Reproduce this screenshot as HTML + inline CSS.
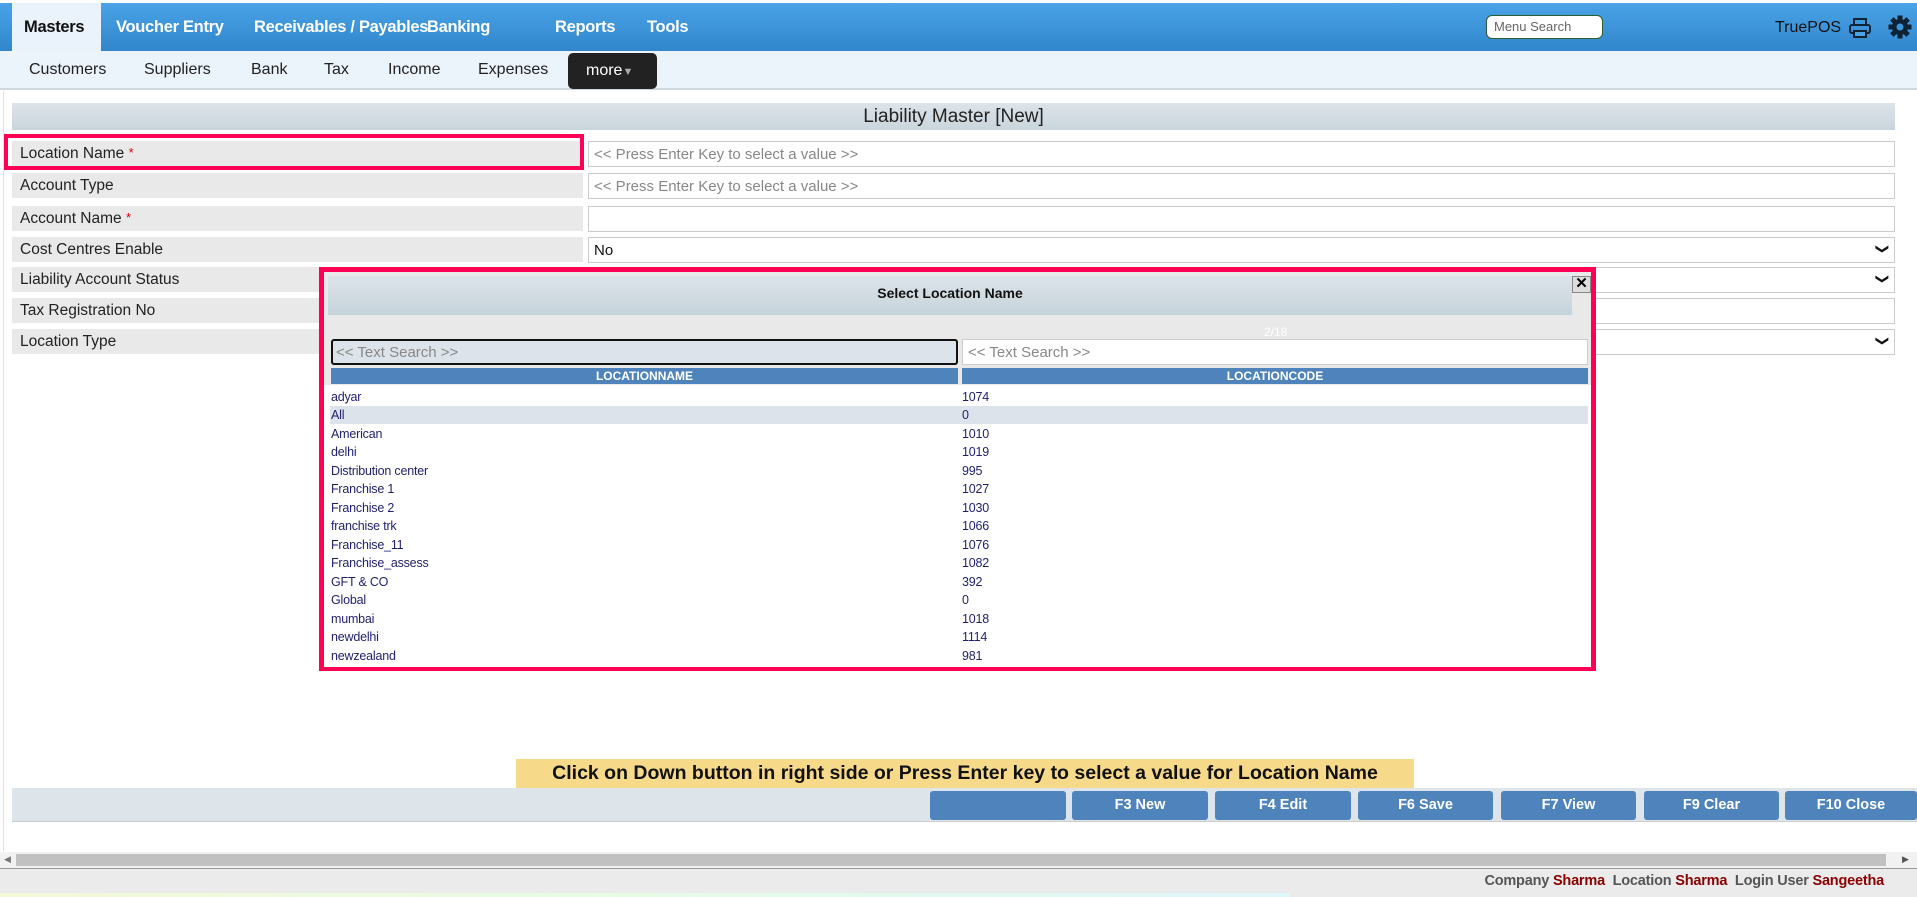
<!DOCTYPE html>
<html><head><meta charset="utf-8"><style>
*{box-sizing:border-box;margin:0;padding:0}
body{width:1917px;height:897px;position:relative;overflow:hidden;background:#fff;font-family:"Liberation Sans",Arial,sans-serif}
.a{position:absolute}
.nav{left:0;top:3px;width:1917px;height:48px;background:linear-gradient(#4aa3e6,#3186cc)}
.nav span{position:absolute;top:15px;color:#fff;font-weight:bold;font-size:16.5px;letter-spacing:-0.3px}
.sub{left:0;top:51px;width:1917px;height:39px;background:#ebf3fb;border-bottom:2px solid #cfd8df}
.sub span{position:absolute;top:10px;font-size:16px;color:#222}
.lbl{position:absolute;left:12px;width:571px;height:25px;background:#e9e9e9;font-size:15.5px;color:#222;padding:4px 8px}
.inp{position:absolute;left:588px;width:1307px;height:26px;border:1px solid #ccc;background:#fff;font-size:15px;color:#888;padding:4px 5px}
.sel{color:#111}
.chev{position:absolute;right:6px;top:3px;font-size:13px;color:#111;transform:rotate(90deg);display:inline-block}
.star{color:#d00;font-size:13px;vertical-align:top}
.row{position:absolute;left:330px;width:1258px;height:18px;font-size:12.5px;color:#1f1f70;letter-spacing:-0.2px}
.row b{font-weight:normal;position:absolute;left:1px;top:2px}
.row i{font-style:normal;position:absolute;left:632px;top:2px}
.btn{position:absolute;top:791px;height:29px;background:#4f83bb;border-radius:3px;color:#fff;font-weight:bold;font-size:14.5px;text-align:center;line-height:29px}
</style></head><body>
<div class="a nav">
 <div class="a" style="left:12px;top:0;width:89px;height:48px;background:#eaf3fb"></div>
 <span style="left:24px;color:#111">Masters</span>
 <span style="left:116px">Voucher Entry</span>
 <span style="left:254px">Receivables / Payables</span>
 <span style="left:427px">Banking</span>
 <span style="left:555px">Reports</span>
 <span style="left:647px">Tools</span>
 <div class="a" style="left:1486px;top:12px;width:117px;height:24px;background:#fff;border:1px solid #2c5e2c;border-radius:6px;font-size:13px;color:#666;padding:3px 7px">Menu Search</div>
 <div class="a" style="left:1775px;top:16px;font-size:16px;color:#111">TruePOS</div>
 <svg class="a" style="left:1849px;top:15px" width="22" height="20" viewBox="0 0 22 20"><rect x="5" y="1" width="12" height="6" fill="none" stroke="#123" stroke-width="2"/><rect x="1" y="7" width="20" height="8" rx="2" fill="none" stroke="#123" stroke-width="2"/><rect x="5" y="13" width="12" height="6" fill="#4aa3e6" stroke="#123" stroke-width="2"/></svg>
 <svg class="a" style="left:1888px;top:12px" width="24" height="24" viewBox="0 0 24 24"><g fill="#0d2233"><circle cx="12" cy="12" r="8"/><rect x="9.5" y="0.5" width="5" height="23"/><rect x="0.5" y="9.5" width="23" height="5"/><rect x="9.5" y="0.5" width="5" height="23" transform="rotate(45 12 12)"/><rect x="9.5" y="0.5" width="5" height="23" transform="rotate(-45 12 12)"/></g><circle cx="12" cy="12" r="3.5" fill="#3a95db"/></svg>
</div>
<div class="a sub">
 <span style="left:29px">Customers</span><span style="left:144px">Suppliers</span><span style="left:251px">Bank</span><span style="left:324px">Tax</span><span style="left:388px">Income</span><span style="left:478px">Expenses</span>
 <div class="a" style="left:568px;top:2px;width:89px;height:36px;background:#222;border-radius:5px;color:#fff;font-size:16px;padding:9px 0 0 18px">more<span style="position:static;color:#aaa;font-size:11px">▼</span></div>
</div>
<div class="a" style="left:3px;top:91px;width:1px;height:760px;background:#e2e2e2"></div>
<div class="a" style="left:12px;top:103px;width:1883px;height:27px;background:linear-gradient(#dde4ea,#c9d5dc);font-size:19px;color:#222;text-align:center;line-height:27px">Liability Master [New]</div>

<div class="lbl" style="top:141px">Location Name <span class="star">*</span></div>
<div class="lbl" style="top:173px">Account Type</div>
<div class="lbl" style="top:206px">Account Name <span class="star">*</span></div>
<div class="lbl" style="top:237px">Cost Centres Enable</div>
<div class="lbl" style="top:267px">Liability Account Status</div>
<div class="lbl" style="top:298px">Tax Registration No</div>
<div class="lbl" style="top:329px">Location Type</div>
<div class="a" style="left:4px;top:134px;width:580px;height:36px;border:4px solid #ff0055"></div>

<div class="inp" style="top:141px">&lt;&lt; Press Enter Key to select a value &gt;&gt;</div>
<div class="inp" style="top:173px">&lt;&lt; Press Enter Key to select a value &gt;&gt;</div>
<div class="inp" style="top:206px"></div>
<div class="inp sel" style="top:237px">No<span class="chev">❯</span></div>
<div class="inp sel" style="top:267px"><span class="chev">❯</span></div>
<div class="inp" style="top:298px"></div>
<div class="inp sel" style="top:329px"><span class="chev">❯</span></div>

<div class="a" style="left:319px;top:267px;width:1277px;height:404px;border:5px solid #ff0055;background:#e9e9e9">
 <div class="a" style="left:4px;top:4px;width:1244px;height:39px;background:linear-gradient(#dde4ea,#c6d3da);text-align:center;font-weight:bold;font-size:14px;line-height:34px;color:#111">Select Location Name</div>
 <div class="a" style="left:1248px;top:4px;width:19px;height:17px;background:#ddd;border:1px solid #888;font-size:15px;font-weight:bold;line-height:14px;text-align:center">✕</div>
 <div class="a" style="left:940px;top:53px;font-size:12px;color:#fff">2/18</div>
 <div class="a" style="left:7px;top:67px;width:627px;height:26px;background:#dce3ea;border:2px solid #111;border-radius:3px;font-size:15px;color:#888;padding:3px 3px">&lt;&lt; Text Search &gt;&gt;</div>
 <div class="a" style="left:638px;top:67px;width:626px;height:26px;background:#fff;border:1px solid #ccc;font-size:15px;color:#888;padding:4px 5px">&lt;&lt; Text Search &gt;&gt;</div>
 <div class="a" style="left:7px;top:96px;width:627px;height:16px;background:#4f83bb;color:#fff;font-weight:bold;font-size:12px;text-align:center;line-height:16px">LOCATIONNAME</div>
 <div class="a" style="left:638px;top:96px;width:626px;height:16px;background:#4f83bb;color:#fff;font-weight:bold;font-size:12px;text-align:center;line-height:16px">LOCATIONCODE</div>
 <div class="a" style="left:0;top:113px;width:1267px;height:282px;background:#fff"></div>
</div>
<div class="row" style="top:388px"><b>adyar</b><i>1074</i></div>
<div class="row" style="top:406px;background:#dce3ea"><b>All</b><i>0</i></div>
<div class="row" style="top:425px"><b>American</b><i>1010</i></div>
<div class="row" style="top:443px"><b>delhi</b><i>1019</i></div>
<div class="row" style="top:462px"><b>Distribution center</b><i>995</i></div>
<div class="row" style="top:480px"><b>Franchise 1</b><i>1027</i></div>
<div class="row" style="top:499px"><b>Franchise 2</b><i>1030</i></div>
<div class="row" style="top:517px"><b>franchise trk</b><i>1066</i></div>
<div class="row" style="top:536px"><b>Franchise_11</b><i>1076</i></div>
<div class="row" style="top:554px"><b>Franchise_assess</b><i>1082</i></div>
<div class="row" style="top:573px"><b>GFT &amp; CO</b><i>392</i></div>
<div class="row" style="top:591px"><b>Global</b><i>0</i></div>
<div class="row" style="top:610px"><b>mumbai</b><i>1018</i></div>
<div class="row" style="top:628px"><b>newdelhi</b><i>1114</i></div>
<div class="row" style="top:647px"><b>newzealand</b><i>981</i></div>

<div class="a" style="left:516px;top:759px;width:898px;height:29px;background:#f7d98a;font-weight:bold;font-size:19.5px;color:#111;text-align:center;line-height:29px;white-space:nowrap">Click on Down button in right side or Press Enter key to select a value for Location Name</div>
<div class="a" style="left:12px;top:788px;width:1905px;height:34px;background:#dde4ea;border-bottom:1px solid #ccc"></div>
<div class="btn" style="left:930px;width:136px"></div>
<div class="btn" style="left:1072px;width:136px">F3 New</div>
<div class="btn" style="left:1215px;width:136px">F4 Edit</div>
<div class="btn" style="left:1358px;width:135px">F6 Save</div>
<div class="btn" style="left:1501px;width:135px">F7 View</div>
<div class="btn" style="left:1644px;width:135px">F9 Clear</div>
<div class="btn" style="left:1785px;width:132px">F10 Close</div>

<div class="a" style="left:0;top:852px;width:1917px;height:16px;background:#f1f1f1"></div>
<div class="a" style="left:16px;top:854px;width:1870px;height:12px;background:#c1c1c1"></div>
<div class="a" style="left:4px;top:854px;font-size:9px;color:#777">◀</div>
<div class="a" style="left:1902px;top:854px;font-size:9px;color:#555">▶</div>
<div class="a" style="left:0;top:868px;width:1917px;height:29px;background:#ebebeb;border-top:1px solid #999"></div>
<div class="a" style="left:0;top:893px;width:1290px;height:4px;background:linear-gradient(90deg,#f3f8d8,#e6fbe6,#dff6fb)"></div>
<div class="a" style="right:33px;top:873px;font-size:14.5px;font-weight:bold;color:#555;letter-spacing:-0.2px">Company <span style="color:#8b0000">Sharma</span>&nbsp; Location <span style="color:#8b0000">Sharma</span>&nbsp; Login User <span style="color:#8b0000">Sangeetha</span></div>
</body></html>
